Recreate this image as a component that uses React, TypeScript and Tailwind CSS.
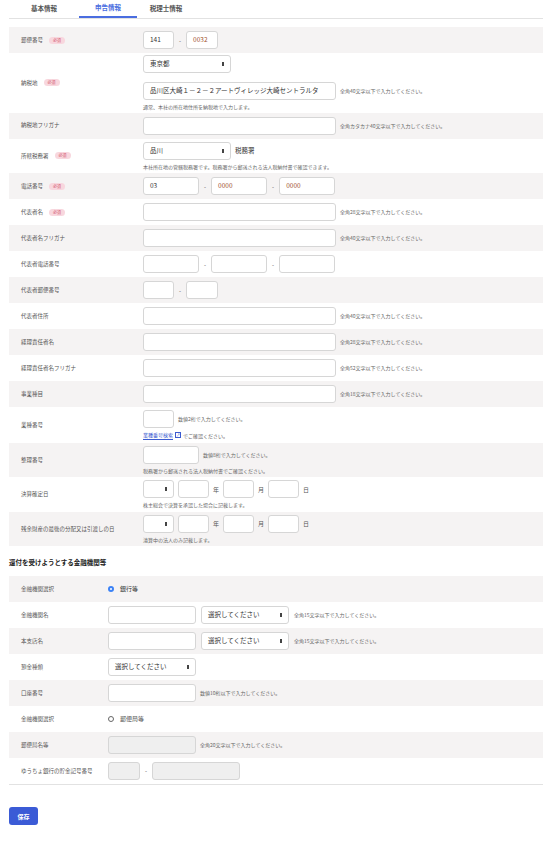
import React from 'react';

const font = { fontFamily: '"Noto Sans CJK JP", "Noto Sans", sans-serif' };

function Req() {
  return <span className="ml-1.5 rounded-full bg-[#f8d7de] px-1 text-[4px] leading-[7px] text-[#d35b72]">必須</span>;
}

function Input({ w, disabled, value, cls = '' }: { w: string; disabled?: boolean; value?: string; cls?: string }) {
  return (
    <div className={`${w} h-[18px] shrink-0 rounded-[3px] border border-[#d6d6d6] ${disabled ? 'bg-[#efefef]' : 'bg-white'} flex items-center px-1.5 text-[6.5px] ${cls}`}>
      {value}
    </div>
  );
}

function Select({ w, value }: { w: string; value?: string }) {
  return (
    <div className={`${w} h-[18px] shrink-0 rounded-[3px] border border-[#d6d6d6] bg-white flex items-center justify-between px-1.5 text-[6.5px] text-[#333]`}>
      <span>{value}</span>
      <span className="h-[4px] w-[2px] bg-[#444]" />
    </div>
  );
}

function Hint({ children }: { children: React.ReactNode }) {
  return <span className="text-[5px] text-[#666]">{children}</span>;
}

function Row({ label, req, gray, children, lw = 'w-[134px]', py = 'py-1' }: { label: string; req?: boolean; gray?: boolean; children: React.ReactNode; lw?: string; py?: string }) {
  return (
    <div className={`flex items-center ${gray ? 'bg-[#f5f3f3]' : 'bg-white'} min-h-[26px] ${py}`}>
      <div className={`${lw} shrink-0 pl-3 text-[5.5px] text-[#555] flex items-center`}>
        {label}
        {req && <Req />}
      </div>
      <div className="flex flex-col gap-[3px]">{children}</div>
    </div>
  );
}

const Dash = () => <span className="mx-[5px] text-[6px] text-[#555]">-</span>;

function DateRow() {
  return (
    <div className="flex items-center gap-[4px] text-[6px] text-[#555]">
      <Select w="w-[31px]" />
      <Input w="w-[31px]" />
      <span>年</span>
      <Input w="w-[31px]" />
      <span>月</span>
      <Input w="w-[31px]" />
      <span>日</span>
    </div>
  );
}

export default function App() {
  return (
    <div className="w-[552px] bg-white pb-1 text-[#333]" style={font}>
      <div className="mx-[9px] flex h-[19px] border-b border-[#e2e2e2] text-[6.5px] font-bold text-[#555]">
        <div className="flex w-[70px] items-center justify-center">基本情報</div>
        <div className="flex w-[58px] items-center justify-center border-b-2 border-[#4a6de0] text-[#4a6de0]">申告情報</div>
        <div className="flex w-[58px] items-center justify-center">税理士情報</div>
      </div>

      <div className="mx-[9px] mt-2">
        <Row label="郵便番号" req gray>
          <div className="flex items-center">
            <Input w="w-[31px]" value="141" /><Dash /><Input w="w-[32px]" value="0032" cls="text-[#a0522d]" />
          </div>
        </Row>
        <Row label="納税地" req py="py-[2px]">
          <Select w="w-[88px]" value="東京都" />
          <div className="mt-[6px] flex items-center gap-1">
            <Input w="w-[193px]" value="品川区大崎１－２－２アートヴィレッジ大崎セントラルタ" cls="text-[6.5px] text-[#333]" />
            <Hint>全角40文字以下で入力してください。</Hint>
          </div>
          <Hint>通常、本社の所在地住所を納税地で入力します。</Hint>
        </Row>
        <Row label="納税地フリガナ" gray>
          <div className="flex items-center gap-1"><Input w="w-[193px]" /><Hint>全角カタカナ40文字以下で入力してください。</Hint></div>
        </Row>
        <Row label="所轄税務署" req py="py-[3px]">
          <div className="flex items-center gap-1 text-[6.5px]"><Select w="w-[88px]" value="品川" /><span>税務署</span></div>
          <Hint>本社所在地の管轄税務署です。税務署から郵送される法人税納付書で確認できます。</Hint>
        </Row>
        <Row label="電話番号" req gray>
          <div className="flex items-center">
            <Input w="w-[56px]" value="03" /><Dash /><Input w="w-[56px]" value="0000" cls="text-[#a0522d]" /><Dash /><Input w="w-[56px]" value="0000" cls="text-[#a0522d]" />
          </div>
        </Row>
        <Row label="代表者名" req>
          <div className="flex items-center gap-1"><Input w="w-[193px]" /><Hint>全角28文字以下で入力してください。</Hint></div>
        </Row>
        <Row label="代表者名フリガナ" gray>
          <div className="flex items-center gap-1"><Input w="w-[193px]" /><Hint>全角40文字以下で入力してください。</Hint></div>
        </Row>
        <Row label="代表者電話番号">
          <div className="flex items-center"><Input w="w-[56px]" /><Dash /><Input w="w-[56px]" /><Dash /><Input w="w-[56px]" /></div>
        </Row>
        <Row label="代表者郵便番号" gray>
          <div className="flex items-center"><Input w="w-[31px]" /><Dash /><Input w="w-[32px]" /></div>
        </Row>
        <Row label="代表者住所">
          <div className="flex items-center gap-1"><Input w="w-[193px]" /><Hint>全角40文字以下で入力してください。</Hint></div>
        </Row>
        <Row label="経理責任者名" gray>
          <div className="flex items-center gap-1"><Input w="w-[193px]" /><Hint>全角28文字以下で入力してください。</Hint></div>
        </Row>
        <Row label="経理責任者名フリガナ">
          <div className="flex items-center gap-1"><Input w="w-[193px]" /><Hint>全角52文字以下で入力してください。</Hint></div>
        </Row>
        <Row label="事業種目" gray>
          <div className="flex items-center gap-1"><Input w="w-[193px]" /><Hint>全角18文字以下で入力してください。</Hint></div>
        </Row>
        <Row label="業種番号" py="py-[3px]">
          <div className="flex items-center gap-1"><Input w="w-[31px]" /><Hint>数値2桁で入力してください。</Hint></div>
          <span className="flex items-center gap-[2px] text-[5px] text-[#666]">
            <span className="border-b border-[#3b5bd0] text-[#3b5bd0]">業種番号検索</span>
            <span className="flex h-[6px] w-[6px] items-center justify-center border border-[#3b5bd0] text-[4px] text-[#3b5bd0]">↗</span>
            でご確認ください。
          </span>
        </Row>
        <Row label="整理番号" gray py="py-[3px]">
          <div className="flex items-center gap-1"><Input w="w-[56px]" /><Hint>数値8桁で入力してください。</Hint></div>
          <Hint>税務署から郵送される法人税納付書でご確認ください。</Hint>
        </Row>
        <Row label="決算確定日" py="py-[3px]">
          <DateRow />
          <Hint>株主総会で決算を承認した場合に記載します。</Hint>
        </Row>
        <Row label="残余財産の最後の分配又は引渡しの日" gray py="py-[3px]">
          <DateRow />
          <Hint>清算中の法人のみ記載します。</Hint>
        </Row>
      </div>

      <div className="mx-[9px] mt-[12px] mb-[8px] text-[6.5px] font-bold text-[#222]">還付を受けようとする金融機関等</div>

      <div className="mx-[9px] border-b border-[#e2e2e2]">
        <Row label="金融機関選択" gray lw="w-[99px]">
          <div className="flex items-center gap-1.5 text-[6px]"><span className="h-[6px] w-[6px] rounded-full border-[2px] border-[#3b82f6] bg-white" /> 銀行等</div>
        </Row>
        <Row label="金融機関名" lw="w-[99px]">
          <div className="flex items-center gap-[5px]"><Input w="w-[88px]" /><Select w="w-[88px]" value="選択してください" /><Hint>全角15文字以下で入力してください。</Hint></div>
        </Row>
        <Row label="本支店名" gray lw="w-[99px]">
          <div className="flex items-center gap-[5px]"><Input w="w-[88px]" /><Select w="w-[88px]" value="選択してください" /><Hint>全角15文字以下で入力してください。</Hint></div>
        </Row>
        <Row label="預金種類" lw="w-[99px]">
          <Select w="w-[88px]" value="選択してください" />
        </Row>
        <Row label="口座番号" gray lw="w-[99px]">
          <div className="flex items-center gap-1"><Input w="w-[88px]" /><Hint>数値10桁以下で入力してください。</Hint></div>
        </Row>
        <Row label="金融機関選択" lw="w-[99px]">
          <div className="flex items-center gap-1.5 text-[6px] text-[#555]"><span className="h-[6px] w-[6px] rounded-full border border-[#666] bg-white" /> 郵便局等</div>
        </Row>
        <Row label="郵便局名等" gray lw="w-[99px]">
          <div className="flex items-center gap-1"><Input w="w-[88px]" disabled /><Hint>全角20文字以下で入力してください。</Hint></div>
        </Row>
        <Row label="ゆうちょ銀行の貯金記号番号" lw="w-[99px]">
          <div className="flex items-center"><Input w="w-[32px]" disabled /><Dash /><Input w="w-[88px]" disabled /></div>
        </Row>
      </div>

      <div className="mx-[9px] mt-[15px]">
        <button className="h-[18px] w-[29px] rounded-[3px] bg-[#3b5bd6] text-[6px] font-bold text-white">保存</button>
      </div>
    </div>
  );
}
